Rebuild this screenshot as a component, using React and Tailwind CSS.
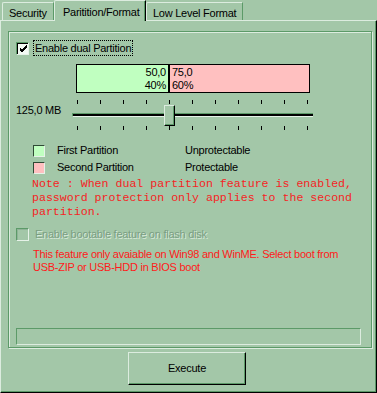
const LIGHT = 'border-[#dcecdf]'

function Tab({ label, selected, width }) {
  if (selected) {
    return (
      <div
        className={`relative z-10 -mb-px h-[21px] ${width} bg-[#a3c7a8] border-l border-t ${LIGHT} border-r border-r-black shadow-[inset_-1px_0_0_#5c9a68] rounded-tl-[2px] pl-[8px] pt-[5px] leading-[13px]`}
      >
        {label}
      </div>
    )
  }
  return (
    <div
      className={`h-[18px] ${width} border-l border-t ${LIGHT} border-r border-r-[#5c9a68] rounded-tl-[2px] pl-[6px] pt-[4px] leading-[13px]`}
    >
      {label}
    </div>
  )
}

function CheckBox({ checked, disabled }) {
  return (
    <div
      className={`w-[13px] h-[13px] border-t border-l border-t-[#5c9a68] border-l-[#5c9a68] border-b border-r border-b-[#e6f2e8] border-r-[#e6f2e8]`}
    >
      <div
        className={`w-full h-full border-t border-l ${disabled ? 'border-[#8fb497] bg-[#a3c7a8]' : 'border-black bg-[#f4faf4]'} flex items-center justify-center`}
      >
        {checked && (
          <svg width="9" height="9" viewBox="0 0 9 9">
            <path d="M1 4 L3 6 L8 1 M1 5 L3 7 L8 2 M1 6 L3 8 L8 3" stroke="#000" strokeWidth="1" fill="none" />
          </svg>
        )}
      </div>
    </div>
  )
}

function Slider() {
  return (
    <div className="relative w-[241px] h-[31px]">
      <div className="flex justify-between pl-[5px] pr-[5px] h-[4px]">
        {Array.from({ length: 11 }).map((_, i) => (
          <div key={i} className="w-px h-full bg-black" />
        ))}
      </div>
      <div className="mt-[9px] h-[4px] border-t border-l border-[#5c9a68] bg-black border-b border-b-[#e6f2e8]" />
      <div className="flex justify-between pl-[5px] pr-[5px] h-[4px] mt-[9px]">
        {Array.from({ length: 11 }).map((_, i) => (
          <div key={i} className="w-px h-full bg-black" />
        ))}
      </div>
      {/* thumb */}
      <div className="absolute left-[92px] top-[5px] w-[11px] h-[21px] bg-[#a3c7a8] border-t border-l border-[#dcecdf] border-b border-r border-b-black border-r-black shadow-[inset_-1px_-1px_0_#5c9a68]" />
    </div>
  )
}

export default function App() {
  return (
    <div className="w-[377px] h-[393px] bg-[#a3c7a8] font-['Liberation_Sans',Arial,sans-serif] text-[11px] tracking-[-0.25px] text-black flex flex-col overflow-hidden">
      {/* tabs */}
      <div className="h-[20px] flex items-end pl-[2px]">
        <Tab label="Security" width="w-[52px]" />
        <Tab label="Paritition/Format" width="w-[92px]" selected />
        <Tab label="Low Level Format" width="w-[97px]" />
      </div>

      {/* panel */}
      <div className={`h-[373px] border-l border-t ${LIGHT} border-r border-b border-r-black border-b-black shadow-[inset_-1px_-1px_0_#5c9a68] flex flex-col`}>
        {/* group box */}
        <div className="ml-[7px] mt-[10px] w-[364px] h-[317px] border border-[#5c9a68] shadow-[1px_1px_0_#dcecdf,inset_1px_1px_0_#dcecdf] flex flex-col">
          <div className="mt-[8px] pl-[7px] h-[16px] flex items-center">
            <CheckBox checked />
            <div className="ml-[4px] h-[16px] px-[1px] border border-dotted border-black flex items-center leading-[13px]">
              Enable dual Partition
            </div>
          </div>

          {/* partition bar */}
          <div className="mt-[8px] ml-[67px] w-[234px] h-[29px] border border-black flex leading-[13px]">
            <div className="w-[91px] bg-[#c0ffc0] text-right pr-[2px] pt-px">
              <div>50,0</div>
              <div>40%</div>
            </div>
            <div className="w-[2px] bg-black" />
            <div className="flex-1 bg-[#ffc0c0] pl-[2px] pt-px">
              <div>75,0</div>
              <div>60%</div>
            </div>
          </div>

          {/* slider row */}
          <div className="mt-[7px] pl-[7px] flex">
            <div className="w-[56px] mt-[4px] leading-[13px]">125,0 MB</div>
            <Slider />
          </div>

          {/* legend */}
          <div className="mt-[11px] pl-[24px] flex flex-col">
            <div className="h-[17px] flex items-center">
              <div className="w-[12px] h-[12px] border-t border-l border-[#2f4a35] border-b border-r border-b-[#e6f2e8] border-r-[#e6f2e8] bg-[#c0ffc0]" />
              <div className="ml-[12px] w-[128px]">First Partition</div>
              <div>Unprotectable</div>
            </div>
            <div className="h-[17px] flex items-center">
              <div className="w-[12px] h-[12px] border-t border-l border-[#2f4a35] border-b border-r border-b-[#e6f2e8] border-r-[#e6f2e8] bg-[#ffc0c0]" />
              <div className="ml-[12px] w-[128px]">Second Partition</div>
              <div>Protectable</div>
            </div>
          </div>

          <div className="mt-px pl-[23px] font-['Liberation_Mono',monospace] text-[11.6px] tracking-normal leading-[14px] text-[#f52424] whitespace-pre">
            {'Note : When dual partition feature is enabled,\npassword protection only applies to the second\npartition.'}
          </div>

          <div className="mt-[7px] pl-[7px] h-[16px] flex items-center">
            <CheckBox disabled />
            <div className="ml-[6px] text-[#7a9e82] [text-shadow:1px_1px_0_#d8eadb] leading-[13px]">
              Enable bootable feature on flash disk
            </div>
          </div>

          <div className="mt-[6px] pl-[24px] pr-[6px] leading-[13px] text-[#ff1a1a]">
            This feature only avaiable on Win98 and WinME. Select boot from
            <br />
            USB-ZIP or USB-HDD in BIOS boot
          </div>

          {/* progress */}
          <div className="mt-auto mb-[2px] ml-[7px] w-[345px] h-[17px] border-t border-l border-[#5c9a68] border-b border-r border-b-[#dcecdf] border-r-[#dcecdf]" />
        </div>

        <button className="mt-[4px] ml-[127px] w-[118px] h-[33px] bg-[#a3c7a8] border-t border-l border-[#dcecdf] border-b border-r border-b-black border-r-black shadow-[inset_-1px_-1px_0_#5c9a68] flex items-center justify-center leading-[13px]">
          Execute
        </button>
      </div>
    </div>
  )
}
